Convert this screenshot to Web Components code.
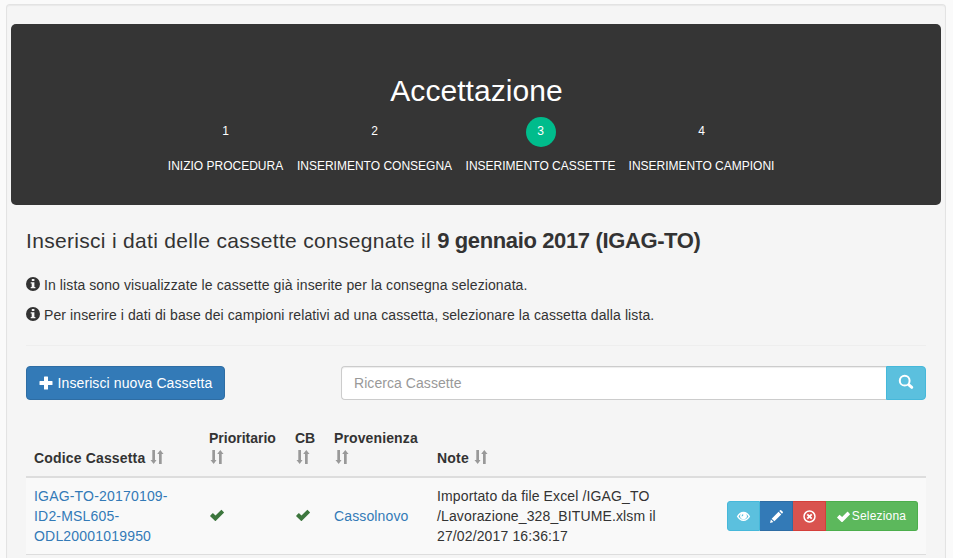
<!DOCTYPE html>
<html lang="it">
<head>
<meta charset="utf-8">
<title>Accettazione</title>
<style>
html,body{margin:0;height:100%;overflow:hidden}
body{background:#fafafa;color:#333;font:14px/20px "Liberation Sans",Arial,sans-serif;padding:4px 7px 0 6px;box-sizing:border-box}
</style>
</head>
<body>
<page-well>
  <step-banner heading="Accettazione">
    <wizard-step number="1" style="--w:115px">INIZIO PROCEDURA</wizard-step>
    <wizard-step number="2" style="--w:155px">INSERIMENTO CONSEGNA</wizard-step>
    <wizard-step number="3" style="--w:149px" active>INSERIMENTO CASSETTE</wizard-step>
    <wizard-step number="4" style="--w:145px">INSERIMENTO CAMPIONI</wizard-step>
  </step-banner>
  <delivery-panel>
    <delivery-title>Inserisci i dati delle cassette consegnate il <b slot="date">9 gennaio 2017 (IGAG-TO)</b></delivery-title>
    <info-line>In lista sono visualizzate le cassette già inserite per la consegna selezionata.</info-line>
    <info-line>Per inserire i dati di base dei campioni relativi ad una cassetta, selezionare la cassetta dalla lista.</info-line>
    <tool-bar>
      <ui-button kind="primary" icon="plus" style="width:199px">Inserisci nuova Cassetta</ui-button>
      <search-box placeholder="Ricerca Cassette"></search-box>
    </tool-bar>
    <cassette-table></cassette-table>
  </delivery-panel>
</page-well>
<script>
const define = (name, html, setup) => customElements.define(name, class extends HTMLElement {
  constructor() {
    super();
    const t = document.createElement('template');
    t.innerHTML = html;
    this.attachShadow({ mode: 'open' }).appendChild(t.content.cloneNode(true));
  }
  connectedCallback() { if (setup) setup(this, this.shadowRoot); }
});

const ICONS = {
  info: '<path fill-rule="evenodd" d="M7 0a7 7 0 1 1 0 14A7 7 0 0 1 7 0zM5.800 2.100v2h2.600v-2zM4.700 5.200v1.200h1v3.500h-1v1.400h4.700V9.900h-1V5.200z"/>',
  plus: '<path d="M5 1q0-.5.500-.5h3q.5 0 .5.500v4h4q.5 0 .5.500v3q0 .5-.5.500H9v4q0 .5-.5.500h-3q-.5 0-.5-.5V9H1q-.5 0-.5-.5v-3q0-.5.500-.5h4z"/>',
  search: '<circle cx="5.700" cy="5.700" r="4.900" fill="none" stroke="currentColor" stroke-width="2"/><path fill="none" stroke="currentColor" stroke-width="2.900" stroke-linecap="round" d="M9.900 9.900l2.900 2.500"/>',
  sort: '<path d="M2.300 0h2.700v10H6.500L3.700 14 .5 10H2.300zM9 14V4H7.200L10.300 0 13.500 4H11.700v10z"/>',
  ok: '<path d="M.2 7.700l2.300-2.400q.3-.3.600 0l2.400 2.200 5.600-5.500q.3-.3.600 0L13.900 4.200q.3.300 0 .6l-8 8q-.5.500-1 0L.2 8.300q-.3-.3 0-.6z"/>',
  eye: '<path fill-rule="evenodd" d="M7 2c3 0 5.400 2 7.200 5-1.800 2.900-4.200 4.900-7.200 4.900S1.600 9.900-.2 7C1.600 4 4 2 7 2zM1.700 7c1.300 2 3.100 3.400 5.300 3.400S11 9 12.300 7c-.7-1.200-1.500-2.100-2.500-2.700a3.600 3.600 0 1 1-5.600 0C3.200 4.900 2.400 5.800 1.700 7zM6.500 4.300Q4.800 5 5 6.900q1.500 0 1.800-1.200z"/>',
  pencil: '<path d="M0 14l1-3.700 2.700 2.700zM1.800 9.300L9.200 1.900l2.900 2.900-7.400 7.400zM10 1.100L11 .2q.5-.4 1 0l1.800 1.800q.4.500 0 1l-.9 1z"/>',
  remove: '<circle cx="7" cy="7" r="5.900" fill="none" stroke="currentColor" stroke-width="1.600"/><path fill="none" stroke="currentColor" stroke-width="1.900" d="M4.600 4.600l4.800 4.800M9.400 4.600L4.600 9.400"/>'
};

define('ui-icon', '<style>:host{display:inline-block;width:var(--s,14px);height:var(--s,14px);flex:none}svg{display:block;width:100%;height:100%;fill:currentColor;overflow:visible}</style><svg viewBox="0 0 14 14"></svg>',
  (el, r) => { r.querySelector('svg').innerHTML = ICONS[el.getAttribute('name')]; });

define('page-well', '<style>:host{display:block;box-sizing:border-box;height:100%;padding:19px 4px 0;background:#f5f5f5;border:1px solid #e3e3e3;border-bottom:0;border-radius:4px 4px 0 0;box-shadow:inset 0 1px 1px rgba(0,0,0,.05)}</style><slot></slot>');

define('step-banner', `<style>
:host{display:block;box-sizing:border-box;height:181px;padding-top:50px;background:#353535;border-radius:5px;color:#fff}
h2{margin:0;font-size:30px;line-height:33px;font-weight:400;text-align:center;letter-spacing:.05px;padding-left:1px}
nav{display:flex;justify-content:center;gap:14px;padding:10px 10px 0 0}
</style><h2></h2><nav><slot></slot></nav>`, (el, r) => { r.querySelector('h2').textContent = el.getAttribute('heading'); });

define('wizard-step', `<style>
:host{display:flex;flex-direction:column;align-items:center;width:var(--w);font-size:12px;white-space:nowrap}
i{font-style:normal;width:30px;height:30px;line-height:28px;text-align:center;border-radius:50%}
:host([active]) i{background:#00bc8c}
span{display:block;line-height:17px;margin-top:11px}
</style><i></i><span><slot></slot></span>`, (el, r) => { r.querySelector('i').textContent = el.getAttribute('number'); });

define('delivery-panel', '<style>:host{display:block;padding:24px 15px 0}</style><slot></slot>');

define('delivery-title', `<style>
:host{display:block;height:24px;margin-bottom:22px;font-size:21px;line-height:24px;white-space:pre;letter-spacing:.31px}
::slotted(b){font-size:22px;letter-spacing:-.37px}
</style><slot></slot><slot name="date"></slot>`);

define('info-line', '<style>:host{display:flex;gap:4px;margin-bottom:10px;white-space:nowrap;letter-spacing:.1px}ui-icon{margin-top:2px}</style><ui-icon name="info"></ui-icon><span><slot></slot></span>');

define('tool-bar', `<style>
:host{display:flex;justify-content:space-between;margin-top:20px;padding:20px 0;border-top:1px solid #eee}
</style><slot></slot>`);

define('ui-button', `<style>
:host{display:flex;align-items:center;justify-content:center;gap:5px;box-sizing:border-box;height:34px;border:1px solid var(--b);border-radius:4px;background:var(--f);color:#fff;white-space:nowrap;letter-spacing:.1px}
:host([kind=primary]){--f:#337ab7;--b:#2e6da4}
:host([kind=info]){--f:#5bc0de;--b:#46b8da}
:host([kind=danger]){--f:#d9534f;--b:#d43f3a}
:host([kind=success]){--f:#5cb85c;--b:#4cae4c}
:host([small]){height:30px;font-size:12px;gap:2px;--s:13px;letter-spacing:.2px}
:host([edge=left]){border-radius:3px 0 0 3px}
:host([edge=mid]){border-radius:0;border-left-width:0;padding-left:1px}
:host([edge=right]){border-radius:0 3px 3px 0;border-left-width:0}
</style><ui-icon></ui-icon><slot></slot>`, (el, r) => {
  const i = document.createElement('ui-icon');
  i.setAttribute('name', el.getAttribute('icon'));
  r.querySelector('ui-icon').replaceWith(i);
});

define('search-box', `<style>
:host{display:flex;width:585px}
input{flex:1;min-width:0;box-sizing:border-box;height:34px;padding:6px 12px;border:1px solid #ccc;border-right:0;border-radius:4px 0 0 4px;background:#fff;font:inherit;letter-spacing:.06px;color:#555;box-shadow:inset 0 1px 1px rgba(0,0,0,.075)}
input::placeholder{color:#999;opacity:1}
ui-button{width:40px;border-radius:0 4px 4px 0;padding-bottom:2px}
</style><input><ui-button kind="info" icon="search"></ui-button>`, (el, r) => { r.querySelector('input').placeholder = el.getAttribute('placeholder'); });

define('cassette-table', `<style>
:host{display:block}
table{table-layout:fixed;width:900px;border-spacing:0}
th{padding:8px;text-align:left;vertical-align:bottom;border-bottom:2px solid #ddd}
th:first-child{letter-spacing:.16px}
th:nth-child(5){letter-spacing:.2px}
th ui-icon{color:#999;vertical-align:-1px;margin-left:.5px}
td{padding:8px;background:#f9f9f9;border-bottom:1px solid #ddd;vertical-align:middle;white-space:nowrap;letter-spacing:.13px}
td ui-icon{color:#3c763d;vertical-align:-1px;margin-left:.5px}
td:first-child{letter-spacing:.19px}
a{color:#337ab7}
.actions{display:flex;justify-content:flex-end}
</style>
<table>
<colgroup><col style="width:175px"><col style="width:86px"><col style="width:39px"><col style="width:103px"><col style="width:250px"><col></colgroup>
<thead><tr>
<th>Codice Cassetta <ui-icon name="sort"></ui-icon></th>
<th>Prioritario<br><ui-icon name="sort"></ui-icon></th>
<th>CB<br><ui-icon name="sort"></ui-icon></th>
<th style="letter-spacing:.12px">Provenienza<br><ui-icon name="sort"></ui-icon></th>
<th>Note <ui-icon name="sort"></ui-icon></th><th></th>
</tr></thead>
<tbody><tr>
<td><a>IGAG-TO-20170109-<br>ID2-MSL605-<br>ODL20001019950</a></td>
<td><ui-icon name="ok"></ui-icon></td>
<td><ui-icon name="ok"></ui-icon></td>
<td><a>Cassolnovo</a></td>
<td>Importato da file Excel /IGAG_TO<br>/Lavorazione_328_BITUME.xlsm il<br>27/02/2017 16:36:17</td>
<td><div class="actions">
<ui-button small kind="info" edge="left" icon="eye" style="width:33px"></ui-button>
<ui-button small kind="primary" edge="mid" icon="pencil" style="width:33px"></ui-button>
<ui-button small kind="danger" edge="mid" icon="remove" style="width:33px"></ui-button>
<ui-button small kind="success" edge="right" icon="ok" style="width:92px">Seleziona</ui-button>
</div></td>
</tr></tbody></table>`);
</script>
</body>
</html>
